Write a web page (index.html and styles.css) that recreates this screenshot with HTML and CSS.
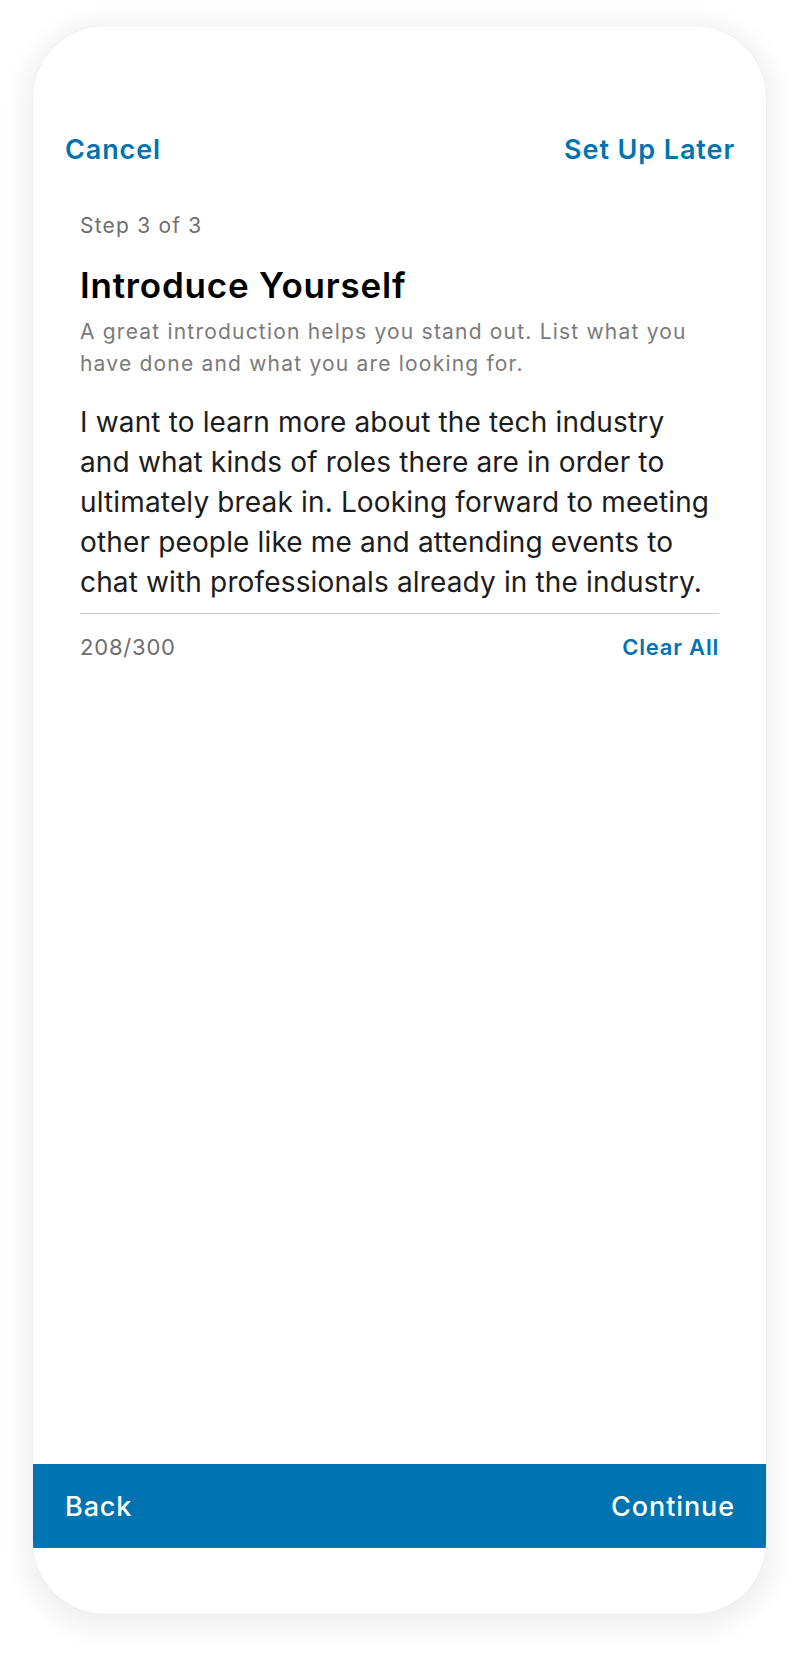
FILE: index.html
```html
<!DOCTYPE html>
<html lang="en">
<head>
<meta charset="utf-8">
<title>Introduce Yourself</title>
<link rel="stylesheet" href="styles.css">
</head>
<body>
<div class="stage">
  <div class="phone">
    <header class="topbar">
      <span class="link">Cancel</span>
      <span class="link">Set Up Later</span>
    </header>
    <main class="content">
      <p class="step">Step 3 of 3</p>
      <h1 class="title">Introduce Yourself</h1>
      <p class="subtitle">A great introduction helps you stand out. List what you<br>have done and what you are looking for.</p>
      <div class="field">
        <p class="body-text">I want to learn more about the tech industry<br>and what kinds of roles there are in order to<br>ultimately break in. Looking forward to meeting<br>other people like me and attending events to<br>chat with professionals already in the industry.</p>
      </div>
      <div class="field-meta">
        <span class="counter">208/300</span>
        <span class="clear">Clear All</span>
      </div>
    </main>
    <footer class="bottombar">
      <span>Back</span>
      <span>Continue</span>
    </footer>
    <div class="bottom-space"></div>
  </div>
</div>
</body>
</html>
```
FILE: styles.css
```css
* { box-sizing: border-box; }
html, body {
  margin: 0;
  padding: 0;
  background: #ffffff;
}
body {
  font-family: Inter, "Noto Sans", sans-serif;
  -webkit-font-smoothing: antialiased;
}
.stage {
  width: 800px;
  height: 1655px;
  padding: 26px 34px 41px 33px;
}
.phone {
  width: 733px;
  height: 1588px;
  background: #ffffff;
  border-radius: 72px;
  box-shadow: 0 0 0 1px rgba(0,0,0,0.025), 0 6px 22px 12px rgba(0,0,0,0.055);
  display: flex;
  flex-direction: column;
  overflow: hidden;
}
.topbar {
  display: flex;
  justify-content: space-between;
  padding: 108px 31px 0 32px;
}
.link {
  font-size: 27px;
  line-height: 32px;
  font-weight: 600;
  letter-spacing: 0.9px;
  color: #0073b1;
}
.content {
  flex: 1;
  padding: 48px 47px 0 47px;
}
.step {
  margin: 0;
  font-size: 21px;
  line-height: 24px;
  letter-spacing: 1.2px;
  color: #6e6e6e;
}
.title {
  margin: 27px 0 0;
  font-size: 35px;
  line-height: 40px;
  font-weight: 600;
  letter-spacing: 0.8px;
  color: #000000;
}
.subtitle {
  margin: 11px 0 0;
  font-size: 21px;
  line-height: 32px;
  letter-spacing: 1.2px;
  color: #7a7a7a;
  white-space: nowrap;
}
.field {
  margin-top: 22px;
  padding-bottom: 11px;
  border-bottom: 1px solid #cbcbcb;
}
.body-text {
  margin: 0;
  font-size: 28px;
  line-height: 40px;
  letter-spacing: 0.15px;
  color: #1c1c1c;
  white-space: nowrap;
}
.field-meta {
  display: flex;
  justify-content: space-between;
  margin-top: 19px;
  font-size: 22px;
  line-height: 28px;
  letter-spacing: 0.8px;
}
.counter { color: #6e6e6e; }
.clear { color: #0073b1; font-weight: 600; }
.bottombar {
  height: 84px;
  background: #0073b1;
  color: #ffffff;
  display: flex;
  justify-content: space-between;
  align-items: center;
  padding: 0 31px 0 32px;
  font-size: 27px;
  font-weight: 500;
  letter-spacing: 0.9px;
}
.bottom-space { height: 66px; }
```
